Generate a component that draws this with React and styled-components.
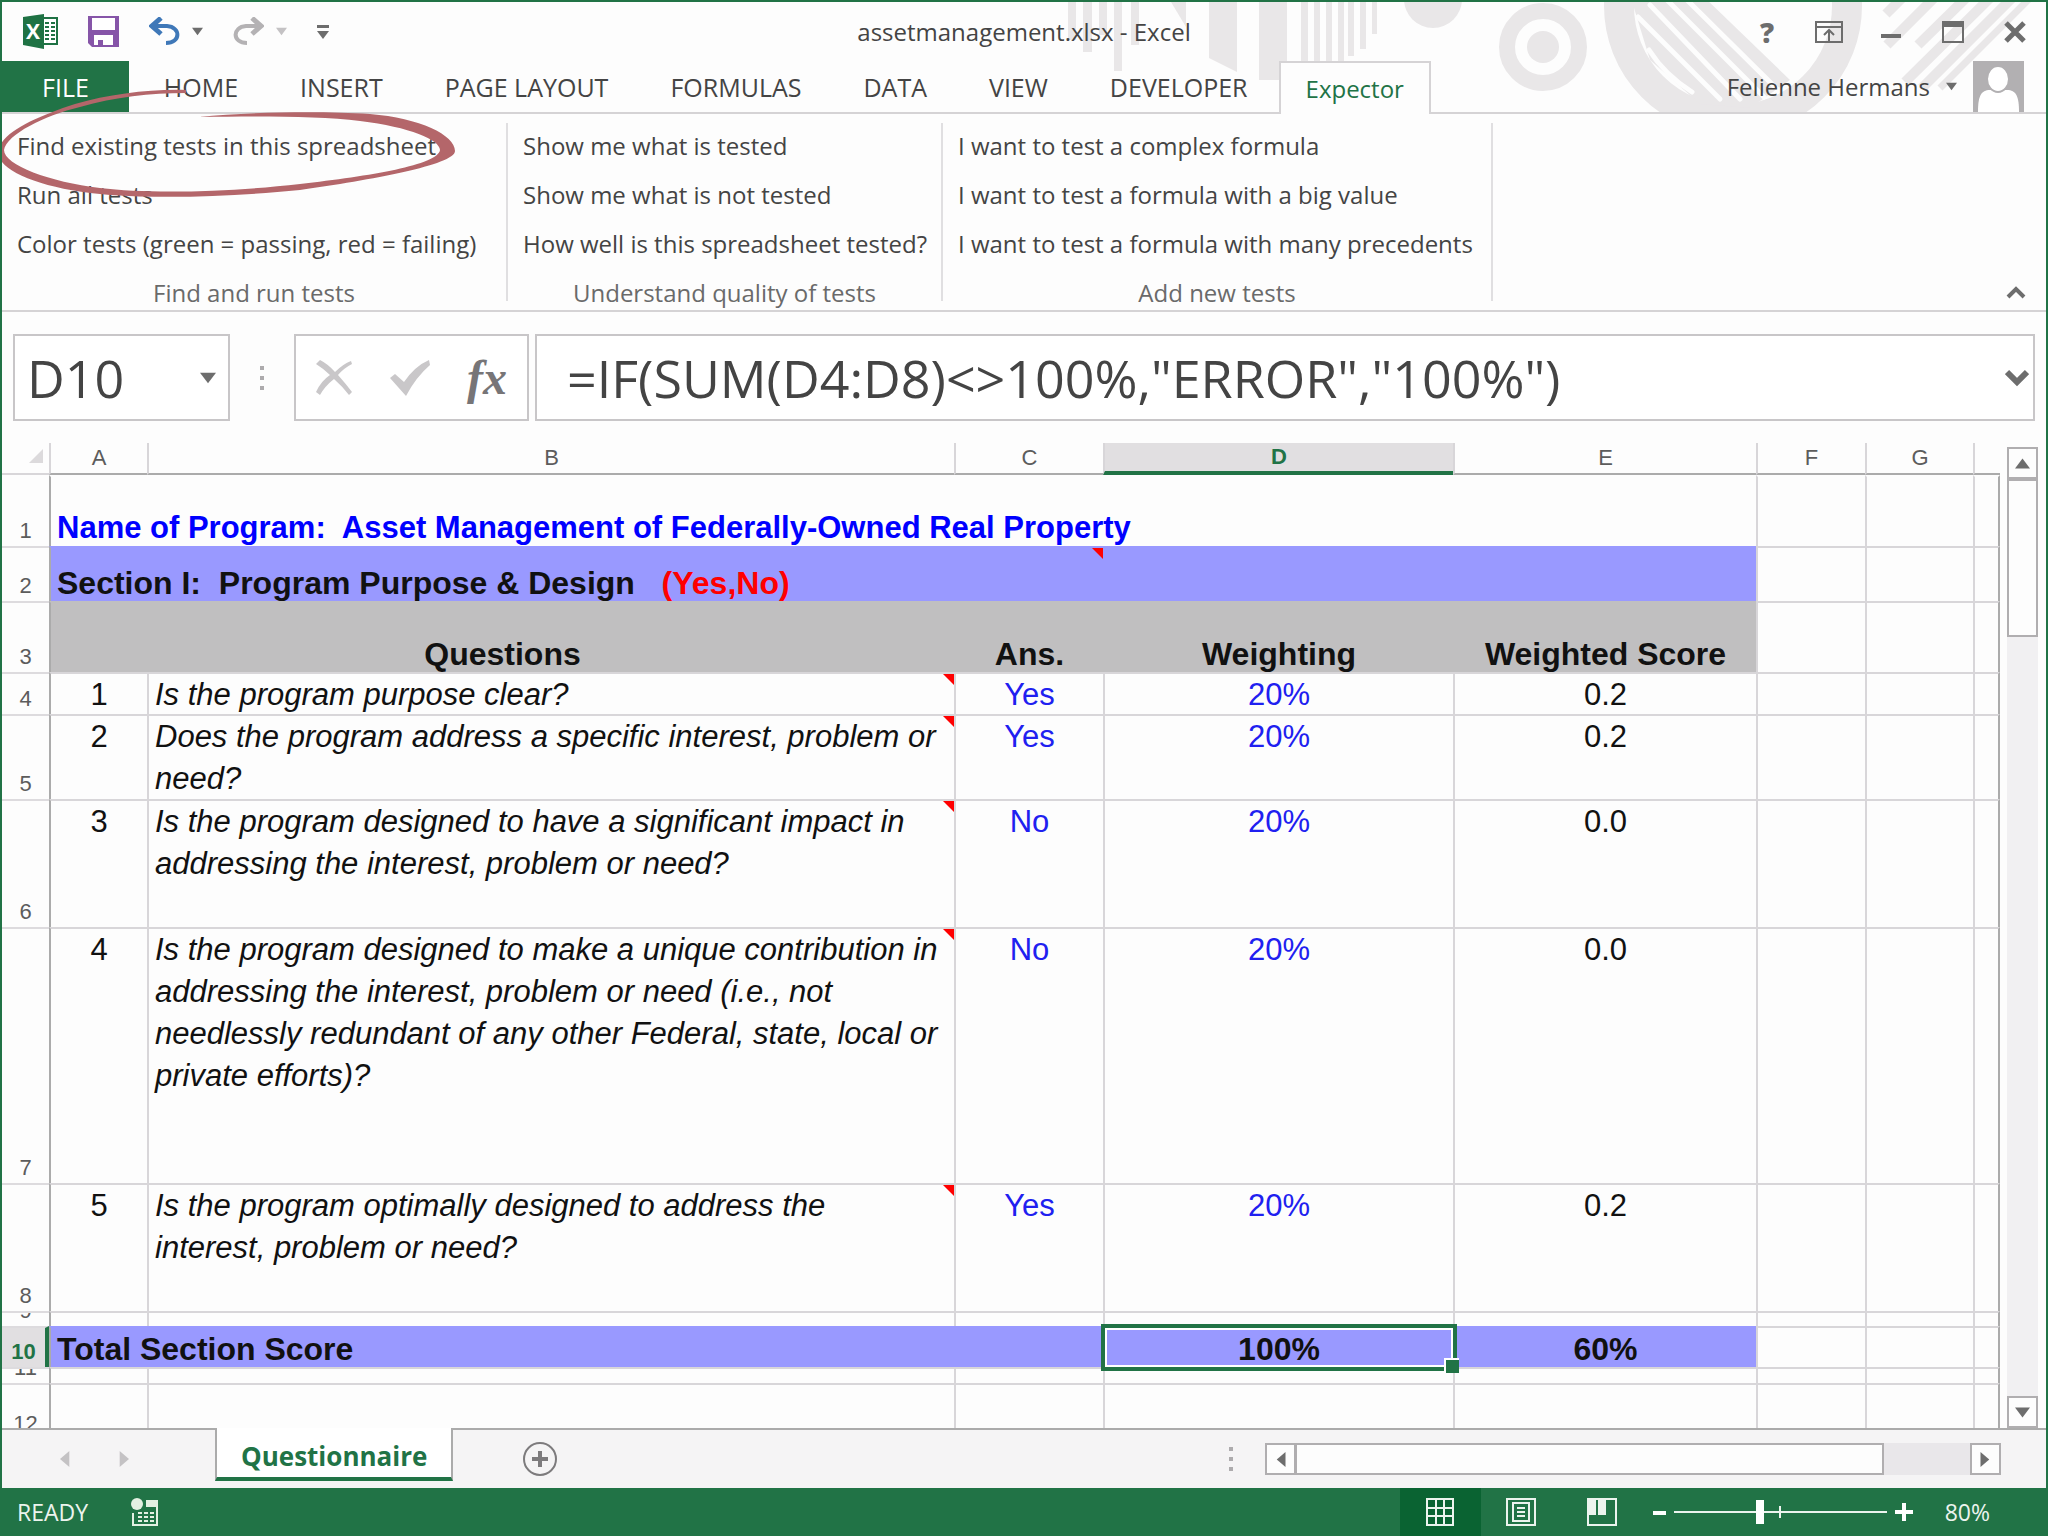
import { Fragment } from 'react'
import styled, { createGlobalStyle, css } from 'styled-components'

const GREEN = '#217346'
const UI_FONT = "'Open Sans', 'Noto Sans', sans-serif"
const CELL_FONT = "'Liberation Sans', Arial, sans-serif"

const GlobalStyle = createGlobalStyle`
    * {
        box-sizing: border-box;
    }

    body {
        margin: 0;
        background: #fdfdfd;
        font-family: ${UI_FONT};
        color: #444444;
    }

    button, input {
        font-family: inherit;
        color: inherit;
        margin: 0;
        padding: 0;
        border: 0;
        background: none;
    }
`

const Window = styled.div`
    position: relative;
    display: flex;
    flex-direction: column;
    height: 100vh;
    background: #fdfdfd;
    border: 2px solid ${GREEN};
    border-bottom: 0;
    overflow: hidden;
`

/* title bar and tabs */

const Header = styled.header`
    position: relative;
`

const Artwork = styled.svg`
    position: absolute;
    top: 0;
    right: 0;
    width: 986px;
    height: 111px;
`

const TitleBar = styled.div`
    position: relative;
    display: grid;
    grid-template-columns: 1fr auto 1fr;
    align-items: center;
    height: 59px;
`

const QuickAccess = styled.div`
    display: flex;
    align-items: center;
    gap: 30px;
    padding-left: 21px;
`

const SplitButton = styled.div`
    display: flex;
    align-items: center;
    gap: 12px;
`

const IconButton = styled.button`
    display: flex;
    align-items: center;
    justify-content: center;
    color: ${props => props.$color || '#6d6d6d'};
`

const Title = styled.h1`
    margin: 0;
    font-size: 24px;
    line-height: 32px;
    font-weight: 400;
`

const WindowControls = styled.div`
    display: flex;
    justify-content: flex-end;
`

const ControlButton = styled(IconButton)`
    width: 62px;
    height: 44px;
    font-size: 28px;
    font-weight: 800;
`

const TabRow = styled.nav`
    position: relative;
    display: flex;
    align-items: stretch;
    height: 53px;
    border-bottom: 2px solid #d5d3d5;
`

const Tab = styled.button`
    padding: 0 31px;
    font-size: 25px;
`

const FileTab = styled(Tab)`
    margin-right: 4px;
    padding: 0 40px;
    background: ${GREEN};
    color: #ffffff;
`

const ActiveTab = styled(Tab)`
    margin-bottom: -2px;
    padding: 0 25px;
    background: #fdfdfd;
    border: 2px solid #d5d3d5;
    border-bottom: 0;
    font-size: 24px;
    color: ${GREEN};
`

const Account = styled.div`
    display: flex;
    align-items: center;
    gap: 16px;
    margin-left: auto;
    padding-right: 22px;
    font-size: 24px;
`

/* ribbon */

const Ribbon = styled.section`
    display: flex;
    position: relative;
    padding: 7px 0 1px;
    border-bottom: 2px solid #d5d3d5;
`

const Group = styled.div`
    display: flex;
    flex-direction: column;
    align-items: flex-start;
    min-width: ${props => props.$width}px;
    padding-left: 15px;
`

const Command = styled.button`
    font-size: 24px;
    line-height: 49px;
    white-space: nowrap;
`

const GroupLabel = styled.div`
    align-self: center;
    padding: 9px 15px 0 0;
    font-size: 24px;
    line-height: 32px;
    color: #6a6a6a;
`

const Divider = styled.div`
    width: 2px;
    margin: 2px 0 8px;
    background: #e0dfe1;
`

const Collapse = styled(IconButton)`
    margin: auto 20px 10px auto;
`

const Marker = styled.svg`
    position: absolute;
    top: 84px;
    left: -2px;
    width: 470px;
    height: 120px;
    pointer-events: none;
`

/* formula bar */

const FormulaBar = styled.div`
    display: flex;
    padding: 22px 11px 22px;
`

const Field = styled.div`
    display: flex;
    align-items: center;
    height: 87px;
    border: 2px solid #c8c6c8;
    background: #ffffff;
`

const NameBox = styled(Field)`
    width: 217px;
    padding: 0 12px 0 12px;
`

const FormulaButtons = styled(Field)`
    width: 235px;
    justify-content: space-between;
    padding: 0 20px;
    margin-right: 6px;
`

const FormulaField = styled(Field)`
    flex: 1;
    padding: 0 4px 0 30px;
`

const FieldInput = styled.input`
    flex: 1;
    min-width: 0;
    font-size: 52px;
    outline: none;
`

const Grip = styled.div`
    display: flex;
    flex-direction: column;
    justify-content: center;
    gap: 6px;
    margin: ${props => props.$margin};

    i {
        width: 4px;
        height: 4px;
        background: #adabad;
    }
`

const FxLabel = styled.span`
    font-family: 'Liberation Serif', 'Times New Roman', serif;
    font-style: italic;
    font-weight: 700;
    font-size: 48px;
    line-height: 48px;
`

/* sheet */

const Workspace = styled.main`
    display: flex;
    flex: 1 1 0;
    min-height: 0;
`

const SheetView = styled.div`
    flex: 1;
    min-width: 0;
    overflow: hidden;
`

const Table = styled.table`
    width: 100%;
    table-layout: fixed;
    border-collapse: separate;
    border-spacing: 0;
    font-family: ${CELL_FONT};
`

const Col = styled.col`
    width: ${props => props.$width ? `${props.$width}px` : 'auto'};
`

const headFont = css`
    font-size: 22px;
    line-height: 28px;
    font-weight: ${props => props.$active ? 700 : 400};
    color: ${props => props.$active ? GREEN : '#5c5c5c'};
    background: ${props => props.$active ? '#e1dfe1' : 'transparent'};
`

const ColumnHead = styled.th`
    ${headFont}
    height: 31px;
    padding: 0;
    border-left: 2px solid #d8d6d9;
    border-bottom: ${props => props.$active ? `4px solid ${GREEN}` : '2px solid #ababab'};
`

const Corner = styled.th`
    height: 31px;
    padding: 0 6px 4px 0;
    border-bottom: 2px solid #d8d6d9;
    text-align: right;
    line-height: 0;
`

const RowHead = styled.th`
    ${headFont}
    padding: 0;
    line-height: 30px;
    border-top: 2px solid ${props => props.$first ? 'transparent' : '#dddbde'};
    ${props => props.$active && `border-right: 4px solid ${GREEN};`}
`

const RowNumber = styled.div`
    display: flex;
    align-items: flex-end;
    justify-content: center;
    height: ${props => props.$height - 2}px;
    overflow: hidden;
`

const Cell = styled.td`
    position: relative;
    padding: 0;
    background: ${props => props.$fill || 'transparent'};
    border-top: 2px solid ${props => props.$fill || (props.$first ? 'transparent' : '#d8d6d9')};
    border-left: 2px solid ${props => props.$edge ? '#ababab' : props.$fill || '#d8d6d9'};

    &:last-child {
        border-right: 2px solid #ababab;
    }
`

const CellText = styled.div`
    height: ${props => props.$height - 2}px;
    display: flex;
    align-items: ${props => props.$bottom ? 'flex-end' : 'flex-start'};
    justify-content: ${props => props.$center ? 'center' : 'flex-start'};
    padding: 0 6px;
    font-size: ${props => props.$bold ? 32 : 31}px;
    line-height: ${props => props.$bottom ? 36 : 42}px;
    font-weight: ${props => props.$bold || props.$title ? 700 : 400};
    font-style: ${props => props.$italic ? 'italic' : 'normal'};
    color: ${props => props.$color || '#111111'};
    white-space: ${props => props.$italic ? 'pre-line' : 'pre'};
`

const Red = styled.span`
    color: #ff0000;
`

const Note = styled.span`
    position: absolute;
    top: 0;
    right: 0;
    border-top: 11px solid #ff0000;
    border-left: 11px solid transparent;
`

const Selection = styled.div`
    position: absolute;
    z-index: 1;
    inset: -4px -4px -4px -4px;
    border: 4px solid ${GREEN};
    box-shadow: inset 0 0 0 2px #ffffff;

    &::after {
        content: '';
        position: absolute;
        right: -6px;
        bottom: -6px;
        width: 13px;
        height: 13px;
        background: ${GREEN};
        border: 2px solid #ffffff;
        border-right: 0;
        border-bottom: 0;
    }
`

/* scroll bars */

const VerticalScroll = styled.div`
    display: flex;
    flex-direction: column;
    width: 31px;
    margin: 4px 8px 0 7px;
    background: #f1f0f2;
`

const HorizontalScroll = styled.div`
    display: flex;
    width: 736px;
    height: 32px;
    background: #e9e7ea;
`

const ScrollButton = styled(IconButton)`
    flex: none;
    width: 31px;
    height: 32px;
    border: 2px solid #b0aeb0;
    background: #fdfdfd;
`

const VerticalThumb = styled.div`
    height: 160px;
    margin: -2px 0 auto;
    border: 2px solid #b0aeb0;
    border-top-width: 4px;
    background: #fdfdfd;
`

const HorizontalThumb = styled.div`
    flex: 1;
    margin: 0 86px 0 -1px;
    border: 2px solid #b0aeb0;
    background: #fdfdfd;
`

/* sheet tabs and status bar */

const SheetBar = styled.div`
    display: flex;
    align-items: center;
    height: 60px;
    padding-right: 45px;
    background: #f5f4f5;
    border-top: 2px solid #ababab;
`

const SheetNav = styled.div`
    display: flex;
    gap: 45px;
    width: 213px;
    padding-left: 54px;
`

const SheetTab = styled.button`
    align-self: flex-start;
    height: 53px;
    margin: -2px 70px 0 0;
    padding: 6px 24px 0;
    background: #ffffff;
    border: 2px solid #ababab;
    border-top: 0;
    border-bottom: 4px solid ${GREEN};
    font-size: 26px;
    font-weight: 700;
    color: ${GREEN};
`

const StatusBar = styled.footer`
    display: flex;
    align-items: center;
    height: 48px;
    padding: 0 56px 0 15px;
    background: ${GREEN};
    color: #ecf4ee;
    font-size: 23px;
`

const MacroButton = styled(IconButton)`
    margin: 0 auto 0 42px;
`

const ViewButton = styled(IconButton)`
    width: 81px;
    height: 48px;
    background: ${props => props.$active ? '#0a6332' : 'transparent'};
`

const ZoomControl = styled.div`
    display: flex;
    align-items: center;
    gap: 8px;
    margin: 0 32px 0 10px;
`

const ZoomSlider = styled.input`
    appearance: none;
    width: 213px;
    height: 24px;
    background:
        linear-gradient(#ecf4ee, #ecf4ee) center / 2px 12px no-repeat,
        linear-gradient(#ecf4ee, #ecf4ee) center / 100% 2px no-repeat;

    &::-webkit-slider-thumb {
        appearance: none;
        width: 8px;
        height: 24px;
        background: #ffffff;
    }
`

function Arrow({ dir = 'down', size = 11, color = '#6d6d6d' }) {
    const points = {
        down: '0,2 12,2 6,10',
        up: '0,10 12,10 6,2',
        left: '10,0 10,12 3,6',
        right: '2,0 2,12 9,6',
    }
    return (
        <svg width={size} height={size} viewBox="0 0 12 12">
            <polygon points={points[dir]} fill={color} />
        </svg>
    )
}

function ExcelLogo() {
    return (
        <svg width="35" height="35" viewBox="0 0 35 35" role="img" aria-label="Excel">
            <rect x="19" y="4" width="15" height="26" fill="#fff" stroke="#1f7244" strokeWidth="2" />
            <path d="M22 9h10M22 13h10M22 17h10M22 21h10M22 25h10" stroke="#1f7244" strokeWidth="2" strokeDasharray="4 2" />
            <path d="M0 3L21 0V35L0 31Z" fill="#1f7244" />
            <text x="10" y="25" textAnchor="middle" fontFamily="Open Sans" fontWeight="700" fontSize="21" fill="#fff">X</text>
        </svg>
    )
}

function SaveIcon() {
    return (
        <svg width="31" height="31" viewBox="0 0 31 31">
            <path d="M0 0H31V31H4L0 27Z" fill="#8655a8" />
            <path d="M4 2H27V14H4Z" fill="#fff" />
            <path d="M6 19H25V29H15V24H10V29H6Z" fill="#fff" />
        </svg>
    )
}

function UndoIcon({ flip, color }) {
    return (
        <svg width="31" height="29" viewBox="0 0 31 29">
            <g transform={flip ? 'translate(31 0) scale(-1 1)' : undefined} fill="none" stroke={color}>
                <path d="M4 9H18C32 10 32 26 17 26" strokeWidth="4" />
                <path d="M12 1L3 9L12 17" strokeWidth="5" />
            </g>
        </svg>
    )
}

function HeaderArt() {
    const bars = [
        [1068, 8, 40], [1083, 9, 52], [1099, 8, 35], [1114, 8, 71], [1131, 8, 45], [1259, 28, 80],
        [1301, 7, 61], [1314, 6, 61], [1326, 6, 61], [1338, 6, 61], [1348, 6, 56], [1360, 6, 49], [1372, 5, 34],
    ]
    return (
        <Artwork viewBox="1060 2 986 111" fill="#e9e7e8" aria-hidden="true">
            {bars.map(([x, width, bottom]) => (
                <rect key={x} x={x} y="2" width={width} height={bottom - 2} />
            ))}
            <polygon points="1171,2 1186,2 1186,27" />
            <polygon points="1209,2 1237,2 1237,72 1209,58" />
            <circle cx="1433" cy="-1" r="29" />
            <circle cx="1543" cy="47" r="36" fill="none" stroke="#e9e7e8" strokeWidth="16" />
            <circle cx="1543" cy="47" r="16" />
            <circle cx="1733" cy="6" r="114" fill="none" stroke="#e9e7e8" strokeWidth="30" />
            <polygon points="1630,-5 1702,-5 1790,80 1750,108 1700,104 1650,60" />
            <g stroke="#fdfdfd" strokeWidth="5" strokeLinecap="round">
                <path d="M1638 17L1720 99" />
                <path d="M1650 5L1740 99" />
                <path d="M1668 1L1764 97" />
                <path d="M1684 -3L1778 90" />
                <path d="M1649 50Q1665 75 1692 92" fill="none" />
            </g>
            <g stroke="#e9e7e8" strokeWidth="10">
                <path d="M1886 14L1902 -2" />
                <path d="M1887 45L1936 -4" />
                <path d="M1918 45L1968 -4" />
                <path d="M1905 82L1992 -4" />
                <path d="M1922 88L2014 -4" />
                <path d="M1940 88L2030 -2" strokeWidth="7" />
            </g>
        </Artwork>
    )
}

const tabs = ['HOME', 'INSERT', 'PAGE LAYOUT', 'FORMULAS', 'DATA', 'VIEW', 'DEVELOPER']

const groups = [
    {
        label: 'Find and run tests',
        width: 504,
        commands: ['Find existing tests in this spreadsheet', 'Run all tests', 'Color tests (green = passing, red = failing)'],
    },
    {
        label: 'Understand quality of tests',
        width: 433,
        commands: ['Show me what is tested', 'Show me what is not tested', 'How well is this spreadsheet tested?'],
    },
    {
        label: 'Add new tests',
        width: 548,
        commands: ['I want to test a complex formula', 'I want to test a formula with a big value', 'I want to test a formula with many precedents'],
    },
]

const columns = [
    { name: 'A', width: 98 },
    { name: 'B', width: 807 },
    { name: 'C', width: 149 },
    { name: 'D', width: 350 },
    { name: 'E', width: 303 },
    { name: 'F', width: 109 },
    { name: 'G', width: 108 },
    { name: '' },
]

const LILAC = '#9999ff'
const GREY = '#c0bfc0'
const BLUE = '#2020f0'

const question = (number, text, answer, score) => [
    { text: number, center: true },
    { text, italic: true, note: true },
    { text: answer, center: true, color: BLUE },
    { text: '20%', center: true, color: BLUE },
    { text: score, center: true },
]

const blank = [{}, {}, {}, {}, {}]

const rows = [
    { height: 71, bottom: true, cells: [{ text: 'Name of Program:  Asset Management of Federally-Owned Real Property', span: 5, title: true, color: '#0000ff' }] },
    {
        height: 55,
        bottom: true,
        cells: [
            { text: <>Section I:  Program Purpose &amp; Design   <Red>(Yes,No)</Red></>, span: 3, bold: true, fill: LILAC, note: true },
            { fill: LILAC },
            { fill: LILAC },
        ],
    },
    {
        height: 71,
        bottom: true,
        cells: [
            { text: 'Questions', span: 2, bold: true, center: true, fill: GREY },
            { text: 'Ans.', bold: true, center: true, fill: GREY },
            { text: 'Weighting', bold: true, center: true, fill: GREY },
            { text: 'Weighted Score', bold: true, center: true, fill: GREY },
        ],
    },
    { height: 42, cells: question('1', 'Is the program purpose clear?', 'Yes', '0.2') },
    { height: 85, cells: question('2', 'Does the program address a specific interest, problem or need?', 'Yes', '0.2') },
    { height: 128, cells: question('3', 'Is the program designed to have a significant impact in addressing the interest, problem or need?', 'No', '0.0') },
    { height: 256, cells: question('4', 'Is the program designed to make a unique contribution in addressing the interest, problem or need (i.e., not needlessly redundant of any other Federal, state, local or private efforts)?', 'No', '0.0') },
    { height: 128, cells: question('5', 'Is the program optimally designed to address the\ninterest, problem or need?', 'Yes', '0.2') },
    { height: 15, cells: blank },
    {
        height: 41,
        bottom: true,
        active: true,
        cells: [
            { text: 'Total Section Score', span: 3, bold: true, fill: LILAC },
            { text: '100%', bold: true, center: true, fill: LILAC, selected: true },
            { text: '60%', bold: true, center: true, fill: LILAC },
        ],
    },
    { height: 16, cells: blank },
    { height: 56, cells: blank },
]

function Sheet() {
    return (
        <SheetView>
            <Table>
                <colgroup>
                    <Col $width={47} />
                    {columns.map(column => <Col key={column.name} $width={column.width} />)}
                </colgroup>
                <thead>
                    <tr>
                        <Corner>
                            <svg width="14" height="14"><polygon points="14,0 14,14 0,14" fill="#dcdadc" /></svg>
                        </Corner>
                        {columns.map(column => (
                            <ColumnHead key={column.name} scope="col" $active={column.name === 'D'}>{column.name}</ColumnHead>
                        ))}
                    </tr>
                </thead>
                <tbody>
                    {rows.map((row, index) => (
                        <tr key={index}>
                            <RowHead scope="row" $first={index === 0} $active={row.active}>
                                <RowNumber $height={row.height}>{index + 1}</RowNumber>
                            </RowHead>
                            {[...row.cells, {}, {}, {}].map((cell, i) => (
                                <Cell key={i} colSpan={cell.span} $fill={cell.fill} $first={index === 0} $edge={i === 0}>
                                    <CellText
                                        $height={row.height}
                                        $bottom={row.bottom}
                                        $center={cell.center}
                                        $bold={cell.bold}
                                        $title={cell.title}
                                        $italic={cell.italic}
                                        $color={cell.color}
                                    >
                                        <span>{cell.text}</span>
                                    </CellText>
                                    {cell.note && <Note />}
                                    {cell.selected && <Selection />}
                                </Cell>
                            ))}
                        </tr>
                    ))}
                </tbody>
            </Table>
        </SheetView>
    )
}

export default function App() {
    return (
        <Window>
            <GlobalStyle />
            <Header>
                <HeaderArt />
                <TitleBar>
                    <QuickAccess>
                        <ExcelLogo />
                        <IconButton aria-label="Save"><SaveIcon /></IconButton>
                        <SplitButton>
                            <IconButton aria-label="Undo"><UndoIcon color="#3f78b8" /></IconButton>
                            <IconButton aria-label="Undo history"><Arrow /></IconButton>
                        </SplitButton>
                        <SplitButton>
                            <IconButton aria-label="Redo"><UndoIcon flip color="#b4b2b4" /></IconButton>
                            <IconButton aria-label="Redo history"><Arrow color="#c4c2c4" /></IconButton>
                        </SplitButton>
                        <IconButton aria-label="Customize toolbar">
                            <svg width="12" height="14" viewBox="0 0 12 14" fill="#6d6d6d">
                                <rect width="12" height="3" />
                                <polygon points="0,6 12,6 6,14" />
                            </svg>
                        </IconButton>
                    </QuickAccess>
                    <Title>assetmanagement.xlsx - Excel</Title>
                    <WindowControls>
                        <ControlButton>?</ControlButton>
                        <ControlButton aria-label="Ribbon display options">
                            <svg width="28" height="22" viewBox="0 0 28 22" fill="none" stroke="currentColor" strokeWidth="2">
                                <path d="M1 1H27V21H1ZM1 6H27M14 20V10M9 14L14 9L19 14" />
                            </svg>
                        </ControlButton>
                        <ControlButton aria-label="Minimize">
                            <svg width="20" height="22" viewBox="0 0 20 22"><rect y="13" width="20" height="4" fill="currentColor" /></svg>
                        </ControlButton>
                        <ControlButton aria-label="Maximize">
                            <svg width="22" height="22" viewBox="0 0 22 22">
                                <path d="M1 1H21V21H1Z" fill="none" stroke="currentColor" strokeWidth="2" />
                                <rect width="22" height="6" fill="currentColor" />
                            </svg>
                        </ControlButton>
                        <ControlButton aria-label="Close">
                            <svg width="22" height="22" viewBox="0 0 22 22">
                                <path d="M2 2L20 20M20 2L2 20" stroke="currentColor" strokeWidth="5" />
                            </svg>
                        </ControlButton>
                    </WindowControls>
                </TitleBar>
                <TabRow>
                    <FileTab>FILE</FileTab>
                    {tabs.map(tab => <Tab key={tab}>{tab}</Tab>)}
                    <ActiveTab>Expector</ActiveTab>
                    <Account>
                        Felienne Hermans
                        <Arrow />
                        <svg width="51" height="51" viewBox="0 0 51 51" role="img" aria-label="Account picture">
                            <rect width="51" height="51" fill="#b2b0b2" />
                            <path d="M5 51C5 35 8 29 17 29H34C43 29 46 35 46 51Z" fill="#fff" />
                            <ellipse cx="25" cy="18" rx="11" ry="13" fill="#fff" stroke="#b2b0b2" strokeWidth="2" />
                        </svg>
                    </Account>
                </TabRow>
            </Header>

            <Ribbon>
                {groups.map(group => (
                    <Fragment key={group.label}>
                        <Group $width={group.width}>
                            {group.commands.map(command => <Command key={command}>{command}</Command>)}
                            <GroupLabel>{group.label}</GroupLabel>
                        </Group>
                        <Divider />
                    </Fragment>
                ))}
                <Collapse aria-label="Collapse ribbon">
                    <svg width="20" height="14" viewBox="0 0 20 14">
                        <path d="M2 12L10 4L18 12" fill="none" stroke="currentColor" strokeWidth="4" />
                    </svg>
                </Collapse>
            </Ribbon>

            <FormulaBar>
                <NameBox>
                    <FieldInput aria-label="Name box" defaultValue="D10" />
                    <IconButton aria-label="Cell names"><Arrow size={16} /></IconButton>
                </NameBox>
                <Grip $margin="0 30px"><i /><i /><i /></Grip>
                <FormulaButtons>
                    <IconButton aria-label="Cancel" $color="#c9c7c9">
                        <svg width="36" height="36" viewBox="0 0 36 36" fill="currentColor">
                            <path d="M0 4L4 0Q12 4 19 12Q27 4 35 1L36 4Q28 8 22 15Q30 24 36 32L33 35Q26 26 18 19Q9 26 4 35L0 32Q5 21 14 15Q8 9 0 4Z" />
                        </svg>
                    </IconButton>
                    <IconButton aria-label="Enter" $color="#c9c7c9">
                        <svg width="40" height="36" viewBox="0 0 40 36" fill="currentColor">
                            <path d="M0 18L5 14L14 22Q25 6 39 0L40 5Q26 17 16 36Z" />
                        </svg>
                    </IconButton>
                    <IconButton aria-label="Insert function" $color="#777577"><FxLabel>fx</FxLabel></IconButton>
                </FormulaButtons>
                <FormulaField>
                    <FieldInput aria-label="Formula" defaultValue={'=IF(SUM(D4:D8)<>100%,"ERROR","100%")'} />
                    <IconButton aria-label="Expand formula bar">
                        <svg width="24" height="18" viewBox="0 0 24 18">
                            <path d="M2 3L12 13L22 3" fill="none" stroke="currentColor" strokeWidth="6" />
                        </svg>
                    </IconButton>
                </FormulaField>
            </FormulaBar>

            <Workspace>
                <Sheet />
                <VerticalScroll>
                    <ScrollButton aria-label="Scroll up"><Arrow dir="up" size={15} /></ScrollButton>
                    <VerticalThumb />
                    <ScrollButton aria-label="Scroll down"><Arrow dir="down" size={15} /></ScrollButton>
                </VerticalScroll>
            </Workspace>

            <SheetBar>
                <SheetNav>
                    <IconButton aria-label="Previous sheet"><Arrow dir="left" size={16} color="#c4c2c4" /></IconButton>
                    <IconButton aria-label="Next sheet"><Arrow dir="right" size={16} color="#c4c2c4" /></IconButton>
                </SheetNav>
                <SheetTab>Questionnaire</SheetTab>
                <IconButton aria-label="New sheet">
                    <svg width="34" height="34" viewBox="0 0 34 34" fill="none" stroke="#7d7b7d">
                        <circle cx="17" cy="17" r="16" strokeWidth="2" />
                        <path d="M17 9V25M9 17H25" strokeWidth="4" />
                    </svg>
                </IconButton>
                <Grip $margin="0 32px 0 auto"><i /><i /><i /></Grip>
                <HorizontalScroll>
                    <ScrollButton aria-label="Scroll left"><Arrow dir="left" size={15} /></ScrollButton>
                    <HorizontalThumb />
                    <ScrollButton aria-label="Scroll right"><Arrow dir="right" size={15} /></ScrollButton>
                </HorizontalScroll>
            </SheetBar>

            <StatusBar>
                READY
                <MacroButton aria-label="Record macro" $color="#e3f0e2">
                    <svg width="28" height="28" viewBox="0 0 28 28" fill="currentColor">
                        <path d="M16 2H28V28H2V15H4V26H26V9H16Z" />
                        <circle cx="7" cy="6" r="6" />
                        <path d="M8 14h4v2h-4zM14 14h4v2h-4zM20 14h4v2h-4zM8 18h4v2h-4zM14 18h4v2h-4zM20 18h4v2h-4zM8 22h4v2h-4zM14 22h4v2h-4zM20 22h4v2h-4z" />
                    </svg>
                </MacroButton>
                <ViewButton aria-label="Normal view" $active $color="#ecf4ee">
                    <svg width="28" height="28" viewBox="0 0 28 28" fill="none" stroke="currentColor" strokeWidth="2">
                        <path d="M1 1H27V27H1ZM10 1V27M18 1V27M1 10H27M1 18H27" />
                    </svg>
                </ViewButton>
                <ViewButton aria-label="Page layout view" $color="#ecf4ee">
                    <svg width="30" height="28" viewBox="0 0 30 28" fill="none" stroke="currentColor" strokeWidth="2">
                        <path d="M1 1H29V27H1ZM7 5H23V23H7ZM11 10H19M11 14H19M11 18H19" />
                    </svg>
                </ViewButton>
                <ViewButton aria-label="Page break view" $color="#ecf4ee">
                    <svg width="30" height="28" viewBox="0 0 30 28" fill="currentColor">
                        <path d="M1 1H29V27H1Z" fill="none" stroke="currentColor" strokeWidth="2" />
                        <rect width="9" height="17" />
                        <rect x="11" width="8" height="17" />
                    </svg>
                </ViewButton>
                <ZoomControl>
                    <IconButton aria-label="Zoom out">
                        <svg width="13" height="18" viewBox="0 0 13 18"><rect y="8" width="13" height="4" fill="#fff" /></svg>
                    </IconButton>
                    <ZoomSlider type="range" min="0" max="200" defaultValue="80" aria-label="Zoom" />
                    <IconButton aria-label="Zoom in">
                        <svg width="18" height="18" viewBox="0 0 18 18"><path d="M9 0V18M0 9H18" stroke="#fff" strokeWidth="4" /></svg>
                    </IconButton>
                </ZoomControl>
                80%
            </StatusBar>

            <Marker viewBox="0 86 470 120" aria-hidden="true">
                <path
                    fill="#b4666a"
                    d="M186 90C150 89 110 94 75 104C35 117 0 133 -2 152C-2 172 45 190 110 195C170 199 240 196 300 190C370 180 455 165 455 151C455 135 420 118 370 114C320 111 250 112 199 117C260 116 320 116 360 121C410 127 440 140 440 150C438 165 370 176 300 184C230 192 150 194 100 188C50 182 4 165 4 150C6 135 45 115 80 107C115 97 150 93 186 93Z"
                />
            </Marker>
        </Window>
    )
}
